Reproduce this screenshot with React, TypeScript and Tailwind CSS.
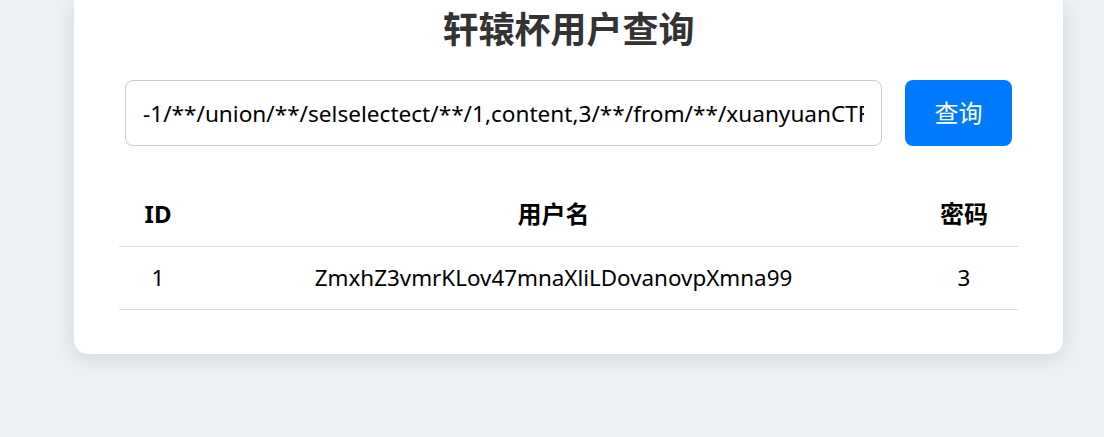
import React from "react";

const FONT = "font-['Noto_Sans','Noto_Sans_CJK_SC',sans-serif]";

export default function App() {
  const payload =
    "-1/**/union/**/selselectect/**/1,content,3/**/from/**/xuanyuanCTF.info";
  return (
    <div className={`min-h-[437px] w-[1104px] bg-[#edf0f3] ${FONT}`}>
      <div className="ml-[74px] w-[989px] rounded-b-[14px] bg-white px-[45px] pb-[44px] pt-[8px] shadow-[0_4px_20px_rgba(0,0,0,0.1)]">
        <h1 className="text-center text-[36px] font-bold leading-[44px] text-[#333]">
          轩辕杯用户查询
        </h1>
        <div className="mt-[28px] flex gap-[23px] px-[6px]">
          <input
            readOnly
            value={payload}
            className="h-[66px] flex-1 rounded-[8px] border border-[#ccc] px-[17px] text-[22.6px] text-black outline-none"
          />
          <button className="h-[66px] w-[107px] rounded-[8px] bg-[#007bff] text-[24px] text-white">
            查询
          </button>
        </div>
        <table className="mt-[37px] w-full border-collapse text-[22.4px] text-black">
          <thead>
            <tr className="border-b border-[#ddd] text-[24px]">
              <th className="h-[63px] w-[78px] text-center font-bold">ID</th>
              <th className="h-[63px] text-center font-bold">用户名</th>
              <th className="h-[63px] w-[108px] text-center font-bold">密码</th>
            </tr>
          </thead>
          <tbody>
            <tr className="border-b border-[#ddd]">
              <td className="h-[63px] text-center">1</td>
              <td className="h-[63px] text-center">
                ZmxhZ3vmrKLov47mnaXliLDovanovpXmna99
              </td>
              <td className="h-[63px] text-center">3</td>
            </tr>
          </tbody>
        </table>
      </div>
    </div>
  );
}
